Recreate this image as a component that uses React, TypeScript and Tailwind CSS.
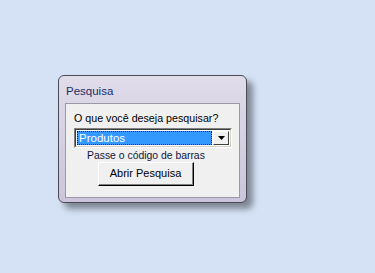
export default function App() {
  return (
    <div
      className="w-full h-[273px] bg-[#d5e2f6] pl-[58px] pt-[75px]"
      style={{ fontFamily: '"Liberation Sans", Arial, sans-serif' }}
    >
      <div className="relative w-[189px] h-[128px]">
        {/* shadow */}
        <div className="absolute left-[6px] top-[6px] w-[189px] h-[128px] rounded-[6px] bg-black/40 blur-[3px]" />
        <div className="relative w-[189px] h-[128px] rounded-[6px] border border-[#4a4a55] bg-gradient-to-b from-[#e0dcea] to-[#cbc4dc] flex flex-col">
          <div className="h-[27px] pl-[7px] pt-[8px] text-[11.5px] leading-[14px] text-[#1b2f66]">
            Pesquisa
          </div>
          <div className="mx-[6px] mb-[4px] flex-1 border border-[#9a9aa6] bg-[#f0f0f0] flex flex-col">
            <div className="pl-[8px] pt-[7px] text-[10.7px] leading-[14px] text-black">
              O que você deseja pesquisar?
            </div>
            <div className="ml-[8px] mt-[3px] w-[158px] h-[20px] border-t border-l border-[#808080] border-b border-r border-b-white border-r-white flex">
              <div className="flex-1 border-t border-l border-[#404040] border-b border-r border-b-[#d4d0c8] border-r-[#d4d0c8] bg-white flex p-[1px]">
                <div className="flex-1 bg-[#3399ff] outline outline-1 outline-dotted outline-[#222] -outline-offset-1 text-white text-[11.5px] leading-[14px] pl-[2px]">
                  Produtos
                </div>
                <div className="w-[16px] ml-[1px] border-t border-l border-white border-b border-r border-b-[#404040] border-r-[#404040] bg-[#f0f0f0] flex items-center justify-center">
                  <svg width="7" height="4" viewBox="0 0 7 4">
                    <polygon points="0,0 7,0 3.5,4" fill="#000" />
                  </svg>
                </div>
              </div>
            </div>
            <div className="ml-[21px] mt-[2px] text-[10.4px] leading-[12px] text-[#10143a]">
              Passe o código de barras
            </div>
            <div className="ml-[32px] mt-[0px] w-[96px] h-[24px] border-t border-l border-white border-b border-r border-b-black border-r-black bg-[#f0f0f0]">
              <div className="w-full h-full border-b border-r border-[#808080] flex items-center justify-center text-[11px] text-black">
                Abrir Pesquisa
              </div>
            </div>
          </div>
        </div>
      </div>
    </div>
  )
}
